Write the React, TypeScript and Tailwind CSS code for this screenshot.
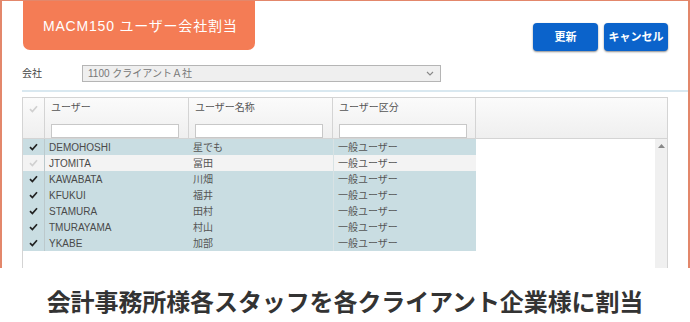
const rows = [
  { id: 'DEMOHOSHI', name: '星でも', kind: '一般ユーザー', on: true },
  { id: 'JTOMITA', name: '冨田', kind: '一般ユーザー', on: false },
  { id: 'KAWABATA', name: '川畑', kind: '一般ユーザー', on: true },
  { id: 'KFUKUI', name: '福井', kind: '一般ユーザー', on: true },
  { id: 'STAMURA', name: '田村', kind: '一般ユーザー', on: true },
  { id: 'TMURAYAMA', name: '村山', kind: '一般ユーザー', on: true },
  { id: 'YKABE', name: '加部', kind: '一般ユーザー', on: true },
];

function Check({ on }: { on: boolean }) {
  return (
    <svg width="9" height="8" viewBox="0 0 9 8">
      <path
        d="M1 4.2 L3.4 6.6 L8 1.2"
        fill="none"
        stroke={on ? '#222' : '#d0d0d0'}
        strokeWidth="1.7"
      />
    </svg>
  );
}

export default function App() {
  return (
    <div className="w-[690px] h-[322px] bg-white font-['Liberation_Sans','Noto_Sans_CJK_JP',sans-serif] overflow-hidden">
      {/* screen frame */}
      <div className="h-[268px] border-x-2 border-t border-[#e3876b] flex flex-col overflow-hidden">
        <div className="flex items-start justify-between">
          <div className="ml-[21px] w-[232px] h-[49px] bg-[#f47c55] rounded-b-[7px] flex items-center pl-[20px] pt-[1px] text-white text-[14px] tracking-[0.8px]">
            MACM150 ユーザー会社割当
          </div>
          <div className="mt-[22px] mr-[20px] flex gap-[6px]">
            <button className="w-[65px] h-[28px] rounded-[4px] bg-[#0b63cb] shadow-[0_1px_2px_rgba(0,0,0,0.45)] text-white text-[11px] font-bold">
              更新
            </button>
            <button className="w-[64px] h-[28px] rounded-[4px] bg-[#0b63cb] shadow-[0_1px_2px_rgba(0,0,0,0.45)] text-white text-[11px] font-bold">
              キャンセル
            </button>
          </div>
        </div>

        <div className="mt-[14px] flex items-center pl-[20px]">
          <span className="w-[60px] text-[10px] text-[#444]">会社</span>
          <div className="w-[359px] h-[17px] border border-[#b5b5b5] bg-[#efefef] flex items-center justify-between pl-[5px] pr-[6px] text-[10px] text-[#777]">
            <span>1100 クライアントＡ社</span>
            <svg width="8" height="5" viewBox="0 0 8 5">
              <path d="M1 1 L4 4 L7 1" fill="none" stroke="#888" strokeWidth="1.1" />
            </svg>
          </div>
        </div>

        <div className="mt-[8px] ml-[20px] h-[2px] bg-[#d9e8f0]" />

        {/* grid */}
        <div className="mt-[5px] ml-[20px] w-[646px] flex-1 border-l border-t border-r border-[#d4d4d4] flex flex-col text-[10px] text-[#444]">
          <div className="h-[41px] flex border-b border-[#d4d4d4] bg-gradient-to-b from-[#fbfbfb] to-[#efefef]">
            <div className="w-[22px] border-r border-[#d4d4d4] flex justify-center pt-[7px]">
              <Check on={false} />
            </div>
            {['ユーザー', 'ユーザー名称', 'ユーザー区分'].map((h, i) => (
              <div
                key={h}
                className={`${i === 2 ? 'w-[143px]' : 'w-[144px]'} border-r border-[#d4d4d4] flex flex-col pl-[6px] pt-[2px]`}
              >
                <span className="text-[#555]">{h}</span>
                <div className="mt-[9px] w-[128px] h-[15px] bg-white border border-[#c8c8c8]" />
              </div>
            ))}
            <div className="flex-1" />
          </div>

          <div className="flex-1 flex">
            <div className="w-[453px] flex flex-col">
              {rows.map((r) => (
                <div
                  key={r.id}
                  className={`h-[16px] flex items-center ${r.on ? 'bg-[#c9dde2]' : 'bg-[#f3f3f3]'}`}
                >
                  <div className="w-[22px] h-full border-r border-[#bcc9cc] flex items-center justify-center">
                    <Check on={r.on} />
                  </div>
                  <div className="w-[144px] pl-[4px] text-[#4a4a4a]">{r.id}</div>
                  <div className="w-[144px] pl-[4px] text-[#555]">{r.name}</div>
                  <div className="w-[143px] h-full pl-[4px] flex items-center border-l border-[#d8e2e4] text-[#555]">
                    {r.kind}
                  </div>
                </div>
              ))}
            </div>
            <div className="flex-1" />
            <div className="w-[12px] bg-[#f0f0f0] flex justify-center pt-[5px]">
              <svg width="7" height="4" viewBox="0 0 7 4">
                <path d="M0 4 L3.5 0 L7 4 Z" fill="#888" />
              </svg>
            </div>
          </div>
        </div>
      </div>

      <div className="h-[54px] flex items-center justify-center pt-[12px]">
        <span className="text-[24px] font-bold text-[#333] font-['Noto_Sans_CJK_JP',sans-serif] tracking-[-0.1px]">
          会計事務所様各スタッフを各クライアント企業様に割当
        </span>
      </div>
    </div>
  );
}
